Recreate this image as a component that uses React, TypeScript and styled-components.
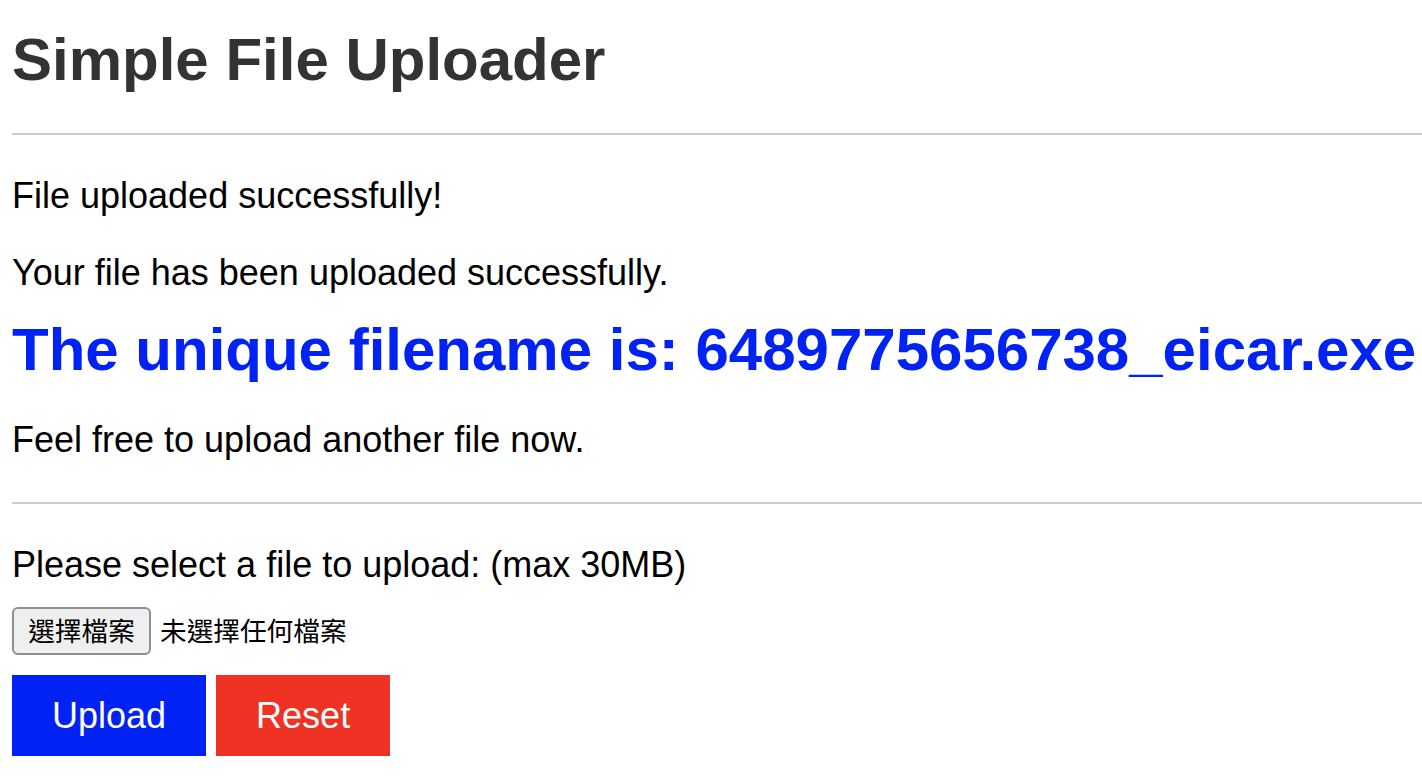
import React from "react";
import styled, { createGlobalStyle } from "styled-components";

const GlobalStyle = createGlobalStyle`
  html, body {
    margin: 0;
    padding: 0;
    background: #ffffff;
  }
  body {
    font-family: "Liberation Sans", Arial, Helvetica, sans-serif;
    color: #000000;
  }
`;

const Page = styled.main`
  display: flex;
  flex-direction: column;
  align-items: stretch;
  padding: 25px 0 0 12px;
  font-size: 36px;
  line-height: 1.15;
`;

const Title = styled.h1`
  margin: 0;
  font-size: 60px;
  line-height: 1.15;
  font-weight: 700;
  color: #333333;
`;

const Rule = styled.hr<{ $top: number }>`
  margin: ${(p) => p.$top}px 0 0 0;
  border: none;
  height: 2px;
  background: #cccccc;
`;

const Text = styled.p<{ $top: number }>`
  margin: ${(p) => p.$top}px 0 0 0;
  font-size: 36px;
  line-height: 1.15;
`;

const Filename = styled.h2`
  margin: 21px 0 0 0;
  font-size: 60px;
  line-height: 1.15;
  font-weight: 700;
  color: #0022f5;
  white-space: nowrap;
`;

const FileRow = styled.div`
  margin-top: 21px;
  display: flex;
  align-items: center;
  gap: 9px;
  font-family: "Liberation Sans", "Noto Sans CJK TC", sans-serif;
  font-size: 26.67px;
`;

const FileButton = styled.button`
  box-sizing: border-box;
  width: 139px;
  height: 48px;
  padding: 0;
  border: 2px solid #8f8f8f;
  border-radius: 6px;
  background: #efefef;
  color: #000000;
  font-family: "Noto Sans CJK TC", sans-serif;
  font-size: 26.67px;
  line-height: 1;
  cursor: pointer;
`;

const FileStatus = styled.span`
  font-family: "Noto Sans CJK TC", sans-serif;
  font-size: 26.67px;
  color: #000000;
`;

const Actions = styled.div`
  margin-top: 20px;
  display: flex;
  gap: 10px;
`;

const ActionButton = styled.button<{ $tone: "primary" | "danger" }>`
  border: none;
  border-radius: 0;
  padding: 20px 40px;
  font-family: "Liberation Sans", Arial, sans-serif;
  font-size: 36px;
  line-height: 1.15;
  color: #ffffff;
  background: ${(p) => (p.$tone === "primary" ? "#0022f5" : "#ee3324")};
  cursor: pointer;
`;

export default function App() {
  return (
    <>
      <GlobalStyle />
      <Page>
        <Title>Simple File Uploader</Title>
        <Rule $top={39} />
        <Text $top={40}>File uploaded successfully!</Text>
        <Text $top={36}>Your file has been uploaded successfully.</Text>
        <Filename>The unique filename is: 6489775656738_eicar.exe</Filename>
        <Text $top={35}>Feel free to upload another file now.</Text>
        <Rule $top={42} />
        <Text $top={40}>Please select a file to upload: (max 30MB)</Text>
        <FileRow>
          <FileButton type="button">選擇檔案</FileButton>
          <FileStatus>未選擇任何檔案</FileStatus>
        </FileRow>
        <Actions>
          <ActionButton type="button" $tone="primary">
            Upload
          </ActionButton>
          <ActionButton type="button" $tone="danger">
            Reset
          </ActionButton>
        </Actions>
      </Page>
    </>
  );
}
